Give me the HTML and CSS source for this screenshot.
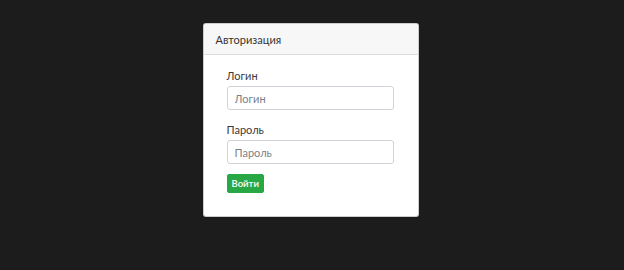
FILE: index.html
```html
<!DOCTYPE html>
<html lang="ru">
<head>
<meta charset="utf-8">
<link rel="stylesheet" href="styles.css">
</head>
<body>
<div class="card">
  <div class="card-header">Авторизация</div>
  <form class="card-body">
    <div class="group">
      <label class="label" for="login">Логин</label>
      <input class="input" id="login" type="text" placeholder="Логин">
    </div>
    <div class="group">
      <label class="label" for="pass">Пароль</label>
      <input class="input" id="pass" type="password" placeholder="Пароль">
    </div>
    <button class="btn" type="button">Войти</button>
  </form>
</div>
</body>
</html>
```
FILE: styles.css
```css
html, body {
  margin: 0;
  padding: 0;
  background: #1c1c1c;
  height: 100%;
}
body {
  display: flex;
  justify-content: center;
  align-items: flex-start;
  font-family: "Lato", "Open Sans", sans-serif;
  color: #333;
}
.card {
  margin-top: 23px;
  margin-left: -3px;
  width: 216px;
  background: #fff;
  border: 1px solid rgba(0,0,0,.2);
  border-radius: 3px;
  box-sizing: border-box;
  overflow: hidden;
}
.card-header {
  height: 31px;
  box-sizing: border-box;
  padding: 0 12px;
  display: flex;
  align-items: center;
  background: #f7f7f7;
  border-bottom: 1px solid #dcdcdc;
  font-size: 11px;
  color: #333;
}
.card-body {
  display: flex;
  flex-direction: column;
  align-items: flex-start;
  padding: 12px 23px 23px 23px;
  margin: 0;
}
.group {
  display: flex;
  flex-direction: column;
  width: 167px;
  margin-bottom: 11px;
}
.group + .group {
  margin-bottom: 10px;
}
.label {
  font-size: 11px;
  line-height: 17px;
  margin-bottom: 2px;
  color: #3a3a3a;
}
.input {
  box-sizing: border-box;
  height: 24px;
  width: 167px;
  border: 1px solid #ced4da;
  border-radius: 3px;
  padding: 0 7px;
  font-family: inherit;
  font-size: 11px;
  color: #495057;
  background: #fff;
  margin: 0;
}
.input::placeholder {
  color: #7a8288;
}
.btn {
  height: 19px;
  box-sizing: border-box;
  padding: 0 4px;
  background: #28a745;
  border: 1px solid #28a745;
  border-radius: 2px;
  color: #fff;
  font-family: inherit;
  font-size: 9.5px;
  font-weight: 600;
  line-height: 17px;
  margin: 0;
}
```
